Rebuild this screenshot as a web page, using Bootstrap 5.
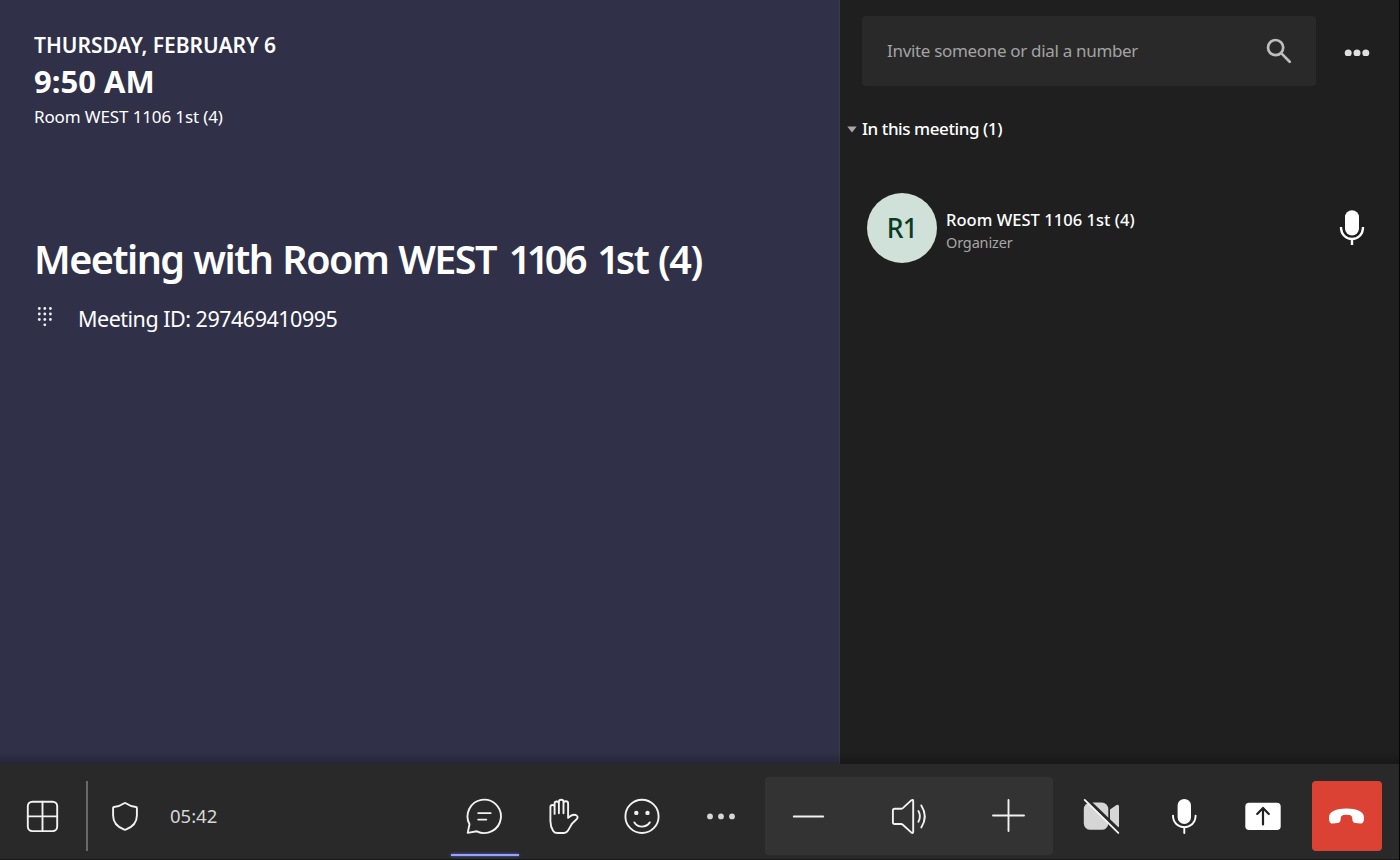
<!DOCTYPE html>
<html lang="en">
<head>
<meta charset="utf-8">
<meta name="viewport" content="width=device-width, initial-scale=1">
<title>Meeting room console</title>
<link href="https://cdn.jsdelivr.net/npm/bootstrap@5.3.0/dist/css/bootstrap.min.css" rel="stylesheet">
<script src="https://cdn.jsdelivr.net/npm/bootstrap@5.3.0/dist/js/bootstrap.bundle.min.js" defer></script>
<style>
  body { font-family: "Noto Sans", "Open Sans", sans-serif; background: #1f1f1f; color: #fff; }
  .console { height: 860px; width: 1400px; border-right: 1px solid #050505; }
  .stage { height: 764px; }
  .info-pane { width: 839px; background: #303148; padding: 32px 34px; white-space: nowrap; }
  .people-pane { background: #1f1f1f; border-left: 1px solid #3b3b3d; }
  .stage-shadow { left: 0; right: 0; bottom: 0; height: 12px; background: linear-gradient(rgba(0,0,0,0), rgba(0,0,0,.24)); }
  .date-line { font-size: 21px; line-height: 26px; font-weight: 600; letter-spacing: -.03px; }
  .time-line { font-size: 31px; line-height: 40px; font-weight: 700; margin-top: 3px; }
  .room-line { font-size: 17px; line-height: 24px; margin-top: 4px; letter-spacing: -.13px; }
  .title-line { font-size: 39.5px; line-height: 54px; font-weight: 600; margin-top: 103px; letter-spacing: -1.5px; word-spacing: 1px; }
  .tight-digits { letter-spacing: -2.3px; margin-left: 3px; }
  .tight-ones { letter-spacing: -4.6px; }
  .tight-one { letter-spacing: -4px; margin-left: 2px; }
  .id-line { font-size: 21.5px; line-height: 30px; margin-top: 18px; letter-spacing: -.49px; }
  .search-box { width: 454px; height: 70px; background: #292929; border-radius: 4px; padding-left: 25px; padding-right: 24px; color: #a3a3a3; font-size: 17px; letter-spacing: -.32px; }
  .people-top { padding: 16px 29px 0 22px; }
  .section-line { margin: 31px 0 0 7px; font-size: 17px; line-height: 24px; font-weight: 500; gap: 5px; letter-spacing: -.43px; }
  .person { margin-top: 52px; padding: 0 34px 0 27px; }
  .avatar { width: 70px; height: 70px; background: #cfe1d9; color: #0b3a25; font-size: 26.5px; line-height: 36px; font-weight: 500; letter-spacing: -.8px; padding-bottom: 1px; }
  .person-text { margin-left: 9px; padding-top: 4px; }
  .person-name { font-size: 16.5px; line-height: 23px; font-weight: 500; letter-spacing: .04px; }
  .person-role { font-size: 14.5px; line-height: 22px; color: #a6a6a6; letter-spacing: -.15px; }
  .control-bar { height: 96px; background: #292929; padding: 9px 17.5px 0 0; border-bottom: 1px solid #181818; }
  .tool { height: 78px; padding: 0; border: 0; background: none; color: #f2f2f2; position: relative; display: flex; align-items: center; justify-content: center; flex: none; }
  .tool svg, .glyph { fill: none; stroke: currentColor; stroke-width: 1.9; stroke-linecap: round; stroke-linejoin: round; flex: none; display: block; }
  .glyph.lens { stroke-width: 2.7; color: #bdbdbd; }
  .glyph.mic { stroke-width: 2.4; }
  .solid-shape { fill: currentColor; stroke: none; }
  .split-line { width: 2px; height: 70px; background: #6a6a6a; margin-left: 2px; }
  .timer { font-size: 18.5px; color: #d6d6d6; }
  .w74 { width: 74px; }
  .w78 { width: 78px; }
  .w79 { width: 79px; }
  .w84 { width: 84px; }
  .w88 { width: 88px; }
  .w114 { width: 114px; }
  .active-tool::after { content: ""; position: absolute; left: 6px; right: 5px; bottom: -1px; height: 2px; background: #98a2ff; box-shadow: 0 0 3px #5f68d8; }
  .volume { width: 288px; height: 78px; background: #333; border-radius: 4px; margin-left: 5px; margin-right: 4px; }
  .hangup { width: 70px; height: 70px; background: #dc4234; color: #fff; border-radius: 4px; margin-left: 10px; }
</style>
</head>
<body>
<div class="console d-flex flex-column overflow-hidden">
  <main class="stage d-flex position-relative">
    <section class="info-pane flex-shrink-0">
      <div class="date-line">THURSDAY, FEBRUARY 6</div>
      <div class="time-line">9:50 AM</div>
      <div class="room-line">Room WEST 1106 1st (4)</div>
      <h1 class="title-line mb-0">Meeting with Room WEST <span class="tight-digits"><span class="tight-ones">11</span>06</span> <span class="tight-one">1</span>st (4)</h1>
      <div class="id-line d-flex">
        <svg class="glyph" width="44" height="30" viewBox="34 304 44 30"><g fill="#f0f0f4" stroke="none"><circle cx="39.3" cy="308.5" r="1.4"/><circle cx="44.8" cy="308.5" r="1.4"/><circle cx="50.4" cy="308.5" r="1.4"/><circle cx="39.3" cy="314" r="1.4"/><circle cx="44.8" cy="314" r="1.4"/><circle cx="50.4" cy="314" r="1.4"/><circle cx="39.3" cy="319.5" r="1.4"/><circle cx="44.8" cy="319.5" r="1.4"/><circle cx="50.4" cy="319.5" r="1.4"/><circle cx="44.8" cy="324.8" r="1.4"/></g></svg>
        <span>Meeting ID: 297469410995</span>
      </div>
    </section>
    <aside class="people-pane flex-grow-1">
      <div class="people-top d-flex align-items-center justify-content-between">
        <div class="search-box d-flex align-items-center justify-content-between">
          <span>Invite someone or dial a number</span>
          <svg class="glyph lens" width="26" height="26" viewBox="1266 38 26 26"><circle cx="1275.6" cy="47.6" r="7.6"/><path d="M1281.4 53.4 1289.700 61.700"/></svg>
        </div>
        <svg class="glyph" width="26" height="10" viewBox="-13 -7 26 10"><g fill="#dedede" stroke="none"><circle cx="-8.8" r="3.5"/><circle r="3.5"/><circle cx="8.8" r="3.5"/></g></svg>
      </div>
      <div class="section-line d-flex align-items-center">
        <svg width="10" height="7" viewBox="0 0 10 7" fill="#a8a8a8"><path d="M.3.5h9.4L5 6.5z"/></svg>
        <span>In this meeting (1)</span>
      </div>
      <div class="person d-flex align-items-center">
        <div class="avatar rounded-circle d-flex align-items-center justify-content-center">R1</div>
        <div class="person-text me-auto">
          <div class="person-name">Room WEST 1106 1st (4)</div>
          <div class="person-role">Organizer</div>
        </div>
        <svg class="glyph mic" width="26" height="38" viewBox="-13 -19 26 38"><rect class="solid-shape" x="-7" y="-17.8" width="14" height="25.3" rx="7"/><path d="M-11-1C-11 15 11 15 11-1M0 11.5V17" stroke-linecap="butt"/></svg>
      </div>
    </aside>
    <div class="stage-shadow position-absolute"></div>
  </main>

  <footer class="control-bar d-flex align-items-center">
    <button class="tool w84" aria-label="Layout"><svg width="41" height="40" viewBox="-20.500 -20.400 41 40"><rect x="-14.700" y="-14.700" width="29.400" height="29.400" rx="4.500"/><path d="M0-14.700V14.700M-14.700 0H14.700"/></svg></button>
    <div class="split-line"></div>
    <button class="tool w74" aria-label="Security"><svg width="40" height="40" viewBox="-20 -20.400 40 40"><path d="M-.8-13.200Q0-13.800.8-13.200C4-11 7.300-9.700 11-9.400Q11.900-9.300 11.900-8.400V-.8C11.900 6 8 10.600.7 13.300Q0 13.500-.7 13.300C-8 10.600-11.900 6-11.900-.8V-8.400Q-11.900-9.300-11-9.400C-7.300-9.700-4-11-.8-13.200Z"/></svg></button>
    <span class="timer ms-2">05:42</span>

    <button class="tool w79 ms-auto active-tool" aria-label="Chat"><svg width="40" height="40" viewBox="-20.500 -20.400 40 40"><path d="M-16.800 16.500-15 7.800A16.700 16.700 0 1 1-7.700 14.900ZM-6.300-3.300H6.200M-6.300 3.200H1.800"/></svg></button>
    <button class="tool w79" aria-label="Raise hand"><svg width="40" height="40" viewBox="-20 -20.400 40 40"><path d="M-8.400-2.500V-12.800A2.150 2.150 0 0 1-4.100-12.800V-3.200M-4.100-12.800V-14.400A2.300 2.300 0 0 1 .5-14.400V-3.200M-8.400-9.300A2.100 2.100 0 0 0-12.600-9.300V4.500C-12.600 8.500-11.700 11.600-9.800 14.500Q-8.500 16.600-5.500 16.600H1Q2.500 16.600 3.600 15.700C5.500 14.200 6.800 10.800 8.500 8 10.500 5.200 14.300 3 14.600 1.200 14.800-.2 13.200-1.700 11-1.700 9-1.700 7.500-.7 5.100 1.500V-12.800A2.300 2.300 0 0 0 .5-12.800"/></svg></button>
    <button class="tool w79" aria-label="React"><svg width="40" height="40" viewBox="-20 -20.400 40 40"><circle r="16.600"/><path d="M-7.600 6C-4 11.600 4 11.600 7.800 6"/><circle class="solid-shape" cx="-5.700" cy="-3.500" r="2.200"/><circle class="solid-shape" cx="5.500" cy="-3.500" r="2.200"/></svg></button>
    <button class="tool w78" aria-label="More"><svg width="40" height="40" viewBox="-20 -20.400 40 40"><g fill="#d6d6d6" stroke="none"><circle cx="-11" r="2.900"/><circle r="2.900"/><circle cx="11" r="2.900"/></g></svg></button>

    <div class="volume d-flex">
      <button class="tool w88" aria-label="Volume down"><svg width="40" height="40" viewBox="-19.500 -20.500 40 40"><path d="M-14.700 0H14.700"/></svg></button>
      <button class="tool w114" aria-label="Speaker"><svg width="40" height="40" viewBox="-19.500 -20.400 40 40"><path d="M-14.800-7.600H-8.500Q-7.500-7.600-6.700-8.300L1.700-16Q3.700-17.500 3.700-15V15Q3.700 17.500 1.700 16L-6.700 8.300Q-7.500 7.600-8.500 7.600H-14.800Q-16.600 7.600-16.600 5.800V-5.800Q-16.600-7.600-14.800-7.600ZM8.900-5.300Q12 0 8.900 5.300M11.800-11Q18.800 0 11.800 11"/></svg></button>
      <button class="tool w84" aria-label="Volume up"><svg width="40" height="40" viewBox="-19.500 -19.500 40 40"><path d="M-15.500 0H15.500M0-15.500V15.500"/></svg></button>
    </div>

    <button class="tool w88" aria-label="Camera off"><svg width="40" height="40" viewBox="-20 -20.400 40 40"><g fill="#d6d6d6" stroke="none"><rect x="-17.200" y="-13.800" width="24.500" height="27.200" rx="6.500"/><path d="M9-6.800 15.500-11.400Q18-12.500 18-10V9.500Q18 12 15.500 10.800L9 6.300Z"/></g><path d="M-14.500-17.500 20 15.500" stroke="#292929" stroke-width="3.200" stroke-linecap="butt"/><path d="M-16.300-16.500 17.300 16.500"/></svg></button>
    <button class="tool text-white w79" aria-label="Microphone"><svg width="40" height="40" viewBox="-20.300 -20.400 40 40"><rect class="solid-shape" x="-6.700" y="-17.500" width="13.400" height="25" rx="6.700"/><path d="M-11.300-.8C-11.300 14.500 11.300 14.500 11.300-.8M0 11V16.700"/></svg></button>
    <button class="tool text-white w78" aria-label="Share"><svg width="40" height="40" viewBox="-20 -20.400 40 40"><rect class="solid-shape" x="-17.700" y="-13.600" width="35.400" height="27.200" rx="3.800"/><path d="M0 8V-8.300M-5.800-2.500 0-8.500 5.800-2.500" stroke="#222" stroke-width="2.200"/></svg></button>
    <button class="tool hangup" aria-label="Leave"><svg width="40" height="40" viewBox="-19.500 -20.400 40 40"><path class="solid-shape" d="M-17.500 1C-17.500-5-10-7.900 0-7.900S17.500-5 17.500 1C17.500 5.200 16.500 7.300 13.700 7.100L9 6.600C6.700 6.200 6 5 5.800 2.500 5.700.2 5-1 3-1.300Q0-1.900-3-1.300C-5-1-5.700.2-5.800 2.500-6 5-6.700 6.200-9 6.600L-13.700 7.100C-16.500 7.300-17.500 5.200-17.500 1Z"/></svg></button>
  </footer>
</div>
</body>
</html>
